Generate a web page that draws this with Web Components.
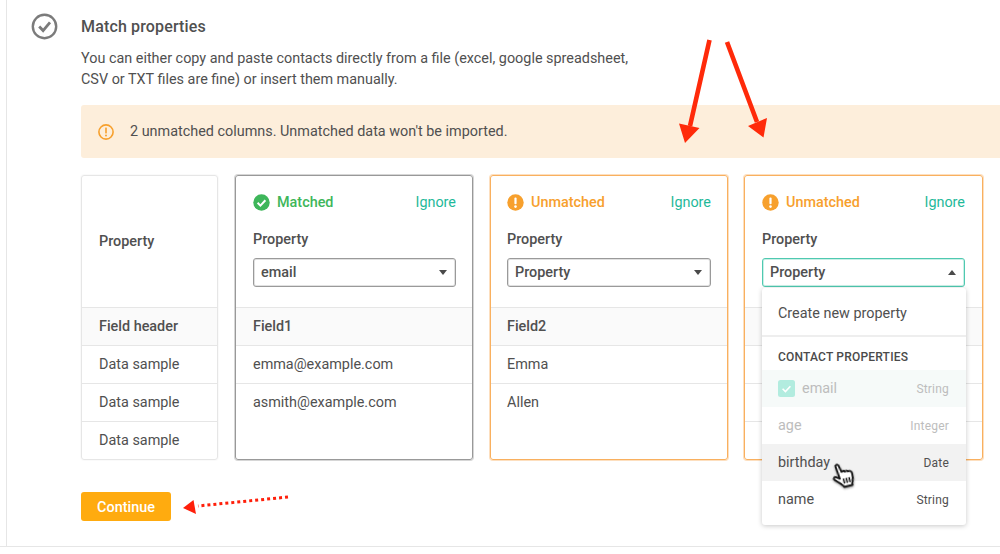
<!DOCTYPE html>
<html lang="en"><head><meta charset="utf-8"><title>Match properties</title>
<style>
html,body{margin:0;padding:0;background:#fff}
body{width:1000px;height:554px;overflow:hidden;font-family:Roboto,"Liberation Sans",sans-serif;color:#4a4a4a}
</style></head><body>
<match-page>
  <step-icon slot="icon"></step-icon>
  <h-title slot="title">Match properties</h-title>
  <span slot="desc">You can either copy and paste contacts directly from a file (excel, google spreadsheet,<br>CSV or TXT files are fine) or insert them manually.</span>
  <alert-bar slot="alert">2 unmatched columns. Unmatched data won't be imported.</alert-bar>
  <legend-col slot="cards"></legend-col>
  <prop-card slot="cards" status="matched" value="email" field="Field1" a="emma@example.com" b="asmith@example.com"></prop-card>
  <prop-card slot="cards" status="unmatched" value="Property" field="Field2" a="Emma" b="Allen" tight></prop-card>
  <prop-card slot="cards" status="unmatched" value="Property" open></prop-card>
  <cta-button slot="action">Continue</cta-button>
  <annot-arrows slot="overlay"></annot-arrows>
</match-page>
<script>
const def=(name,html)=>customElements.define(name,class extends HTMLElement{
  constructor(){super();this.attachShadow({mode:'open'});}
  connectedCallback(){this.shadowRoot.innerHTML=typeof html==='function'?html(this):html;}
});
const warn=`<svg width="17" height="17" viewBox="0 0 17 17"><circle cx="8.5" cy="8.5" r="8.2" fill="#f7a02d"/><rect x="7.4" y="3.4" width="2.2" height="6.8" rx="1" fill="#fff"/><circle cx="8.5" cy="12.6" r="1.3" fill="#fff"/></svg>`;
const ok=`<svg width="17" height="17" viewBox="0 0 17 17"><circle cx="8.5" cy="8.5" r="8.2" fill="#3eb65a"/><path d="M4.6 8.8l2.8 2.8 5-5.4" fill="none" stroke="#fff" stroke-width="2"/></svg>`;

def('match-page',`<style>
:host{display:block;position:relative;height:554px;box-sizing:border-box;overflow:hidden}
.frame{display:flex;height:546px;box-sizing:border-box;border-left:1px solid #e6e6e6;margin-left:6px}
.rule{position:absolute;left:0;right:0;top:546px;height:1px;background:#e6e6e6}
.ic{width:74px;flex:none;box-sizing:border-box;padding:13px 0 0 24px}
.main{flex:1;min-width:0;padding-top:15px}
.title{height:23px}
.desc{margin-top:10px;font-size:14.4px;line-height:21px;color:#505050}
.alert{margin:15px -24px 0 0;display:block}
.cards{display:flex;gap:17px;margin-top:17px}
.act{margin-top:32px}
</style>
<div class="frame"><div class="ic"><slot name="icon"></slot></div>
<div class="main"><div class="title"><slot name="title"></slot></div>
<div class="desc"><slot name="desc"></slot></div>
<div class="alert"><slot name="alert"></slot></div>
<div class="cards"><slot name="cards"></slot></div>
<div class="act"><slot name="action"></slot></div></div></div>
<div class="rule"></div><slot name="overlay"></slot>`);

def('step-icon',`<style>:host{display:block;width:27px;height:27px}svg{display:block}</style>
<svg width="27" height="27" viewBox="0 0 27 27"><circle cx="13.5" cy="13.5" r="11.7" fill="none" stroke="#7b7b7b" stroke-width="2.4"/><path d="M8.2 13.6l3.9 4 6.9-8.2" fill="none" stroke="#7b7b7b" stroke-width="2.8"/></svg>`);

def('h-title',`<style>:host{display:block;font-size:16px;line-height:23px;font-weight:500;color:#505050;letter-spacing:.15px}</style><slot></slot>`);

def('alert-bar',`<style>:host{display:flex;align-items:center;height:53px;background:#fdeedb;border-radius:3px;padding-left:17px;font-size:14.4px;color:#505050}
svg{display:block;margin-right:16px;flex:none}</style>
<svg width="16" height="16" viewBox="0 0 16 16"><circle cx="8" cy="8" r="7.1" fill="none" stroke="#f7a02d" stroke-width="1.6"/><rect x="7.2" y="3.6" width="1.6" height="5.8" fill="#f7a02d"/><circle cx="8" cy="11.5" r="1" fill="#f7a02d"/></svg><span><slot></slot></span>`);

const rowCss=`.row{height:38px;box-sizing:border-box;border-top:1px solid #e6e6e6;display:flex;align-items:center;font-size:14.4px;color:#505050}
.row.f{background:#fafafa;font-weight:500;color:#505050}`;

def('legend-col',`<style>:host{display:block;flex:none;width:137px;height:285px;box-sizing:border-box;border:1px solid #e6e6e6;box-shadow:0 0 0 1px rgba(0,0,0,.02);border-radius:3px;overflow:hidden}
.top{height:131px;display:flex;align-items:center;padding:0 17px;font-size:14.4px;font-weight:500;color:#505050;box-sizing:border-box}
${rowCss}.row{padding:0 17px}</style>
<div class="top">Property</div><div class="row f">Field header</div><div class="row">Data sample</div><div class="row">Data sample</div><div class="row">Data sample</div>`);

def('prop-select',el=>{const o=el.hasAttribute('open');return `<style>:host{display:flex;align-items:center;justify-content:space-between;height:29px;box-sizing:border-box;border:1px solid ${o?'#4fc9b0':'#9a9a9a'};box-shadow:inset 0 0 0 1px ${o?'rgba(79,201,176,.3)':'rgba(154,154,154,.3)'};border-radius:3px;padding:0 8px 0 7px;font-size:14.4px;font-weight:500;color:#505050;background:#fff}
i{width:0;height:0;border-left:4.5px solid transparent;border-right:4.5px solid transparent;${o?'border-bottom:5px solid #4a4a4a':'border-top:5px solid #4a4a4a'};display:block}</style><span><slot></slot></span><i></i>`;});

def('prop-card',el=>{
 const m=el.getAttribute('status')==='matched',c=m?'#3eb65a':'#f7a02d',open=el.hasAttribute('open'),bc=m?'#999':'#f9b05f',soft=m?'rgba(153,153,153,.4)':'rgba(249,176,95,.4)';
 const r=(t,f)=>`<div class="row${f?' f':''}">${t||''}</div>`;
 return `<style>:host{display:block;position:relative;flex:none;width:238px;height:285px;box-sizing:border-box;border:1px solid ${bc};box-shadow:0 0 0 1px ${soft};border-radius:3px}
:host([open]){width:239px;margin-left:-1px}
.top{height:131px;padding:16px 16px 0 17px;box-sizing:border-box}
:host([open]) .top{padding-right:17px}
:host([tight]) .top{padding-left:16px}
.st{display:flex;align-items:center;height:20px;font-size:14.4px;font-weight:500;color:${c}}
.st svg{display:block;margin-right:7px}.st span{flex:1}.st a{color:#1fb99a;font-weight:400}
.lab{margin-top:18px;height:20px;line-height:20px;font-size:14.4px;font-weight:500;color:#505050}
.sel{margin-top:8px}
${rowCss}.row{padding:0 17px}.row:last-child{border-top:0}
:host([tight]) .row{padding-left:16px}
</style>
<div class="top"><div class="st">${m?ok:warn}<span>${m?'Matched':'Unmatched'}</span><a>Ignore</a></div>
<div class="lab">Property</div><div class="sel"><prop-select ${open?'open':''}>${el.getAttribute('value')}</prop-select></div></div>
${r(el.getAttribute('field'),1)}${r(el.getAttribute('a'))}${r(el.getAttribute('b'))}${r('')}
${open?'<prop-menu></prop-menu>':''}`;
});

def('prop-menu',`<style>:host{display:block;position:absolute;left:17px;top:112px;width:204px;height:237px;background:#fff;border-radius:3px;box-shadow:0 1px 5px rgba(0,0,0,.22);font-size:14.4px;color:#505050;z-index:3}
.new{display:flex;align-items:center;padding:4px 16px 0;box-sizing:border-box;border-bottom:2px solid #eee;height:49px}
h4{margin:0;height:33px;display:flex;align-items:center;padding:7px 16px 0;box-sizing:border-box;font-size:12px;font-weight:500;letter-spacing:.2px;color:#4a4a4a}
.it{height:37px;display:flex;align-items:center;justify-content:space-between;padding:0 17px 0 16px;position:relative}
.it small{font-size:12px;letter-spacing:.2px}
.dis{color:#bdbdbd}.chk{background:#f6faf9}.hov{background:#f2f2f2}
.it span{display:flex;align-items:center}
.cb{width:17px;height:17px;border-radius:2.5px;background:#b2ecdf;margin-right:7px;display:block}
.hand{position:absolute;left:70px;top:17px;filter:drop-shadow(0 1px 1px rgba(0,0,0,.45));transform:rotate(-14deg);z-index:2}
</style>
<div class="new">Create new property</div><h4>CONTACT PROPERTIES</h4>
<div class="it dis chk"><span><svg class="cb" viewBox="0 0 17 17"><path d="M4.6 8.8l2.8 2.8 5-5.4" fill="none" stroke="#fff" stroke-width="1.6"/></svg>email</span><small>String</small></div>
<div class="it dis"><span>age</span><small>Integer</small></div>
<div class="it hov"><span>birthday</span><small>Date</small><svg class="hand" width="25" height="28" viewBox="0 0 26 28"><path d="M6 3.2c0-2 2.8-2.2 3.2-.2l1.6 7.2c1.6-1 2.8-.8 3.4.5 1.2-.8 2.6-.6 3.2.6 1.400-.6 3.4.2 3.6 2.2.2 3-.4 6.6-1.4 8.8-.6 1.4-1 2.5-1 3.7H9.8c-.6-2-2.2-3.5-4-5.4L1.8 16.4c-1.2-1.4.4-3.4 2-2.4l3.6 2.6z" fill="#fff" stroke="#111" stroke-width="1.9" stroke-linejoin="round"/><path d="M11 17.5v5M14 17.5v5M17 17.5v5" stroke="#111" stroke-width="1.6"/></svg></div>
<div class="it"><span>name</span><small>String</small></div>`);

def('cta-button',`<style>:host{display:flex;align-items:center;justify-content:center;width:90px;height:29px;box-sizing:border-box;padding-top:1px;background:#ffab0f;border-radius:3px;color:#fff;font-size:14.4px;font-weight:500}</style><slot></slot>`);

def('annot-arrows',`<style>:host{display:block;position:absolute;left:0;top:0;width:1000px;height:554px;pointer-events:none;z-index:5}svg{display:block}</style>
<svg width="1000" height="554" viewBox="0 0 1000 554">
<path d="M709.5 40L690 126M727 42L757 122" stroke="#ff2a0a" stroke-width="4.6" fill="none"/>
<path d="M679 123.500L699.500 128L685 143zM748 126L767 118L763.500 137.500z" fill="#ff2a0a"/>
<path d="M288 497L198 506" stroke="#ff1f0a" stroke-width="3" stroke-dasharray="3 3" fill="none"/>
<path d="M183 508L193.500 500L196 514z" fill="#ff1f0a"/></svg>`);
</script>
</body></html>
